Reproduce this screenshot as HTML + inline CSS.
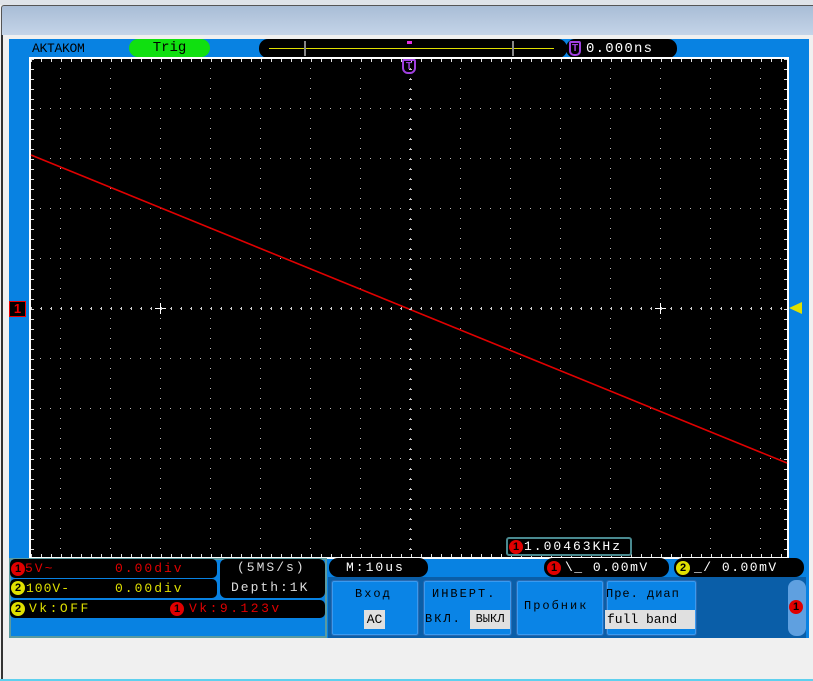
<!DOCTYPE html>
<html><head><meta charset="utf-8"><style>
*{margin:0;padding:0;box-sizing:border-box}
body{width:813px;height:681px;background:#f0f0f0;position:relative;overflow:hidden;font-family:"Liberation Mono",monospace}
.a{position:absolute}
.pill{position:absolute;background:#000;border-radius:9px}
.t{position:absolute;font-size:13px;white-space:pre;line-height:16px;letter-spacing:2px}
.c{position:absolute;width:14px;height:14px;border-radius:50%;font:bold 11px "Liberation Sans",sans-serif;text-align:center;line-height:14px;color:#000}
.btn{position:absolute;background:#0a84e6;border:1px solid #2a6ab0;border-radius:3px;box-shadow:inset 0 0 0 1px #3a9af0}
.bt{position:absolute;font:12px "Liberation Mono",monospace;letter-spacing:2px;white-space:pre;color:#000}
</style></head><body>
<div class="a" style="left:0;top:0;width:813px;height:5px;background:#dfe3e8"></div>
<div class="a" style="left:1px;top:5px;width:812px;height:30px;background:linear-gradient(#a9bdd6,#c4d4e8);border-top:1px solid #555;border-left:1px solid #555;border-radius:3px 0 0 0"></div>
<div class="a" style="left:1px;top:35px;width:2px;height:646px;background:#333"></div>
<div class="a" style="left:0;top:679px;width:813px;height:2px;background:#5fd0ee"></div>
<div class="a" style="left:9px;top:39px;width:800px;height:599px;background:#0882e2"></div>
<div class="a" style="left:32px;top:41px;font-size:13px;color:#000;letter-spacing:-0.3px">AKTAKOM</div>
<div class="a" style="left:129px;top:39px;width:81px;height:18px;background:#10e010;border-radius:9px;text-align:center;font-size:14px;line-height:18px">Trig</div>
<div class="pill" style="left:259px;top:39px;width:308px;height:19px"></div>
<div class="a" style="left:269px;top:48px;width:285px;height:1px;background:#e0e000"></div>
<div class="a" style="left:304px;top:41px;width:2px;height:15px;background:#888"></div>
<div class="a" style="left:512px;top:41px;width:2px;height:15px;background:#888"></div>
<div class="a" style="left:407px;top:41px;width:5px;height:3px;background:#e030e0"></div>
<div class="pill" style="left:566px;top:39px;width:111px;height:19px"></div>
<div class="a" style="left:569px;top:41px;width:12px;height:15px;border:2px solid #a040e0;border-radius:2px 2px 5px 5px;color:#a040e0;font:bold 10px 'Liberation Sans';text-align:center;line-height:11px">T</div>
<div class="t" style="left:586px;top:41px;color:#fff;font-size:14px;letter-spacing:1.2px">0.000ns</div>
<svg class="a" style="left:29px;top:57px" width="760" height="502">
<defs>
<pattern id="vd" x="1" y="1" width="50" height="10" patternUnits="userSpaceOnUse"><rect x="30" y="0" width="1" height="1" fill="#bbb"/></pattern>
<pattern id="hd" x="1" y="1" width="10" height="50" patternUnits="userSpaceOnUse"><rect x="0" y="0" width="1" height="1" fill="#bbb"/></pattern>
</defs>
<rect x="0" y="0" width="760" height="502" fill="#fff"/>
<rect x="2" y="2" width="756" height="498" fill="#000"/>
<rect x="2" y="2" width="756" height="498" fill="url(#vd)"/>
<rect x="2" y="51" width="756" height="448" fill="url(#hd)"/>
<polyline points="2,98 758,406" stroke="#e00000" stroke-width="1.6" fill="none"/>
<path d="M126 251.5h11M131.5 246v11M626 251.5h11M631.5 246v11" stroke="#fff" stroke-width="1"/>
</svg>
<svg class="a" style="left:29px;top:57px" width="760" height="502" id="ov"></svg>
<div class="a" style="left:402px;top:59px;width:14px;height:15px;border:2px solid #a040e0;border-radius:2px 2px 6px 6px;color:#a040e0;font:bold 10px 'Liberation Sans';text-align:center;line-height:11px">T</div>
<div class="a" style="left:9px;top:301px;width:17px;height:16px;background:#000;border:1px solid #e00;color:#e00;font:bold 13px 'Liberation Sans';text-align:center;line-height:14px">1</div>
<div class="a" style="left:789px;top:302px;width:0;height:0;border-top:6px solid transparent;border-bottom:6px solid transparent;border-right:13px solid #e0e000"></div>
<div class="a" style="left:506px;top:537px;width:126px;height:19px;background:#000;border:2px solid #4a8a90;border-radius:3px"></div>
<div class="c" style="left:509px;top:540px;background:#e00000">1</div>
<div class="t" style="left:524px;top:539px;color:#fff;letter-spacing:2px">1.00463KHz</div>
<div class="a" style="left:9px;top:558px;width:318px;height:80px;background:#0882e2;border:2px solid #5a9aa0"></div>
<div class="pill" style="left:10px;top:559px;width:207px;height:19px;border-radius:5px"></div>
<div class="pill" style="left:10px;top:579px;width:207px;height:19px;border-radius:5px"></div>
<div class="pill" style="left:220px;top:559px;width:105px;height:39px;border-radius:6px"></div>
<div class="pill" style="left:10px;top:600px;width:315px;height:18px;border-radius:5px"></div>
<div class="c" style="left:11px;top:562px;background:#e00000">1</div>
<div class="t" style="left:25px;top:561px;color:#e00000">5V~</div>
<div class="t" style="left:115px;top:561px;color:#e00000">0.00div</div>
<div class="c" style="left:11px;top:581px;background:#e0e000">2</div>
<div class="t" style="left:26px;top:581px;color:#e0e000;letter-spacing:1px">100V-</div>
<div class="t" style="left:115px;top:581px;color:#e0e000">0.00div</div>
<div class="t" style="left:237px;top:560px;color:#ddd">(5MS/s)</div>
<div class="t" style="left:231px;top:580px;color:#ddd">Depth:1K</div>
<div class="c" style="left:11px;top:602px;background:#e0e000">2</div>
<div class="t" style="left:29px;top:601px;color:#e0e000;letter-spacing:2.5px">Vk:OFF</div>
<div class="c" style="left:170px;top:602px;background:#e00000">1</div>
<div class="t" style="left:189px;top:601px;color:#e00000;letter-spacing:2.5px">Vk:9.123v</div>
<div class="a" style="left:328px;top:577px;width:478px;height:61px;background:#0a5ea8"></div>
<div class="pill" style="left:329px;top:558px;width:99px;height:19px"></div>
<div class="t" style="left:346px;top:560px;color:#fff">M:10us</div>
<div class="pill" style="left:544px;top:558px;width:125px;height:19px"></div>
<div class="c" style="left:547px;top:561px;background:#e00000">1</div>
<div class="t" style="left:565px;top:560px;color:#fff;letter-spacing:1.5px">\_ 0.00mV</div>
<div class="pill" style="left:674px;top:558px;width:130px;height:19px"></div>
<div class="c" style="left:676px;top:561px;background:#e0e000">2</div>
<div class="t" style="left:694px;top:560px;color:#fff;letter-spacing:1.5px">_/ 0.00mV</div>
<div class="btn" style="left:331px;top:580px;width:88px;height:56px"></div>
<div class="bt" style="left:355px;top:587px">Вход</div>
<div class="a" style="left:364px;top:610px;width:21px;height:19px;background:#e0e0e0;font-size:13px;line-height:19px;text-align:center">AC</div>
<div class="btn" style="left:423px;top:580px;width:89px;height:56px"></div>
<div class="bt" style="left:432px;top:587px">ИНВЕРТ.</div>
<div class="bt" style="left:425px;top:612px">ВКЛ.</div>
<div class="a" style="left:470px;top:610px;width:40px;height:19px;background:#e0e0e0;font-size:12px;line-height:19px;text-align:center">ВЫКЛ</div>
<div class="btn" style="left:516px;top:580px;width:88px;height:56px"></div>
<div class="bt" style="left:524px;top:599px">Пробник</div>
<div class="btn" style="left:606px;top:580px;width:91px;height:56px"></div>
<div class="bt" style="left:606px;top:587px;letter-spacing:1px">Пре. диап</div>
<div class="a" style="left:605px;top:610px;width:90px;height:19px;background:#e0e0e0;font-size:13px;line-height:19px;padding-left:2px;white-space:pre">full band</div>
<div class="a" style="left:788px;top:580px;width:18px;height:56px;background:#5fa0e0;border-radius:8px"></div>
<div class="c" style="left:789px;top:600px;background:#e00000">1</div>
<script>
var s=document.getElementById('ov'),h='';
for(var x=2;x<758;x+=10){var L=(x-31)%50==0?5:3;h+='<rect x="'+x+'" y="2" width="1" height="'+L+'" fill="#ddd"/><rect x="'+x+'" y="'+(500-L)+'" width="1" height="'+L+'" fill="#ddd"/>';h+='<rect x="'+x+'" y="250" width="1" height="3" fill="#ccc"/>';}
for(var y=2;y<500;y+=10){var L=(y-51)%50==0?5:3;h+='<rect x="2" y="'+y+'" width="'+L+'" height="1" fill="#ddd"/><rect x="'+(758-L)+'" y="'+y+'" width="'+L+'" height="1" fill="#ddd"/>';h+='<rect x="380" y="'+y+'" width="3" height="1" fill="#ccc"/>';}
s.innerHTML=h;
</script>
</body></html>
